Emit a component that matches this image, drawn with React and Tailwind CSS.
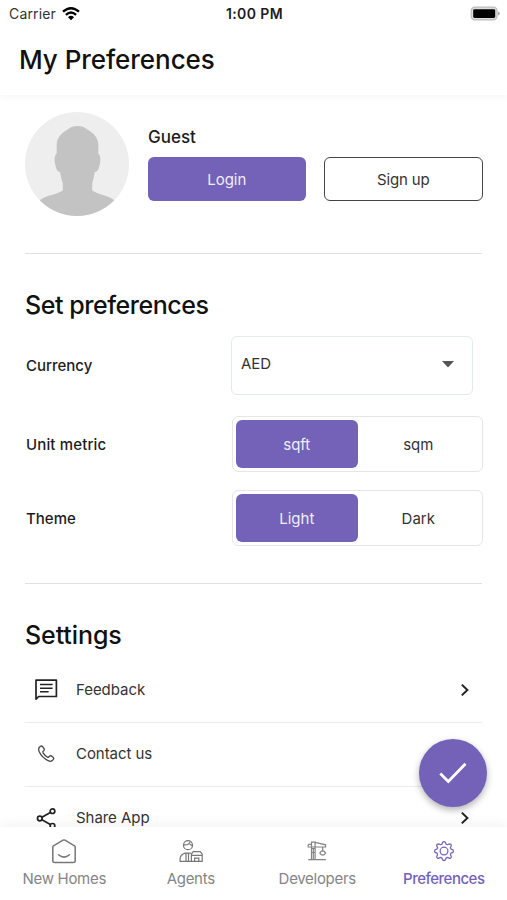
import React, { useState } from "react";

const ChevronIcon = () => (
  <svg width="10" height="14" viewBox="0 0 10 14" fill="none">
    <path d="M1.8 1.6 7.4 7 1.8 12.4" stroke="#222" strokeWidth="2" />
  </svg>
);

const FeedbackIcon = () => (
  <svg width="24" height="24" viewBox="0 0 24 24" fill="none" stroke="#222">
    <path d="M2 21.2V2.2h20.4v16.3H4.7Z" strokeWidth="1.7" strokeLinejoin="round" />
    <path d="M6 6.5h12.6M6 10.2h12.6M6 13.8h8.6" strokeWidth="1.6" />
  </svg>
);

const PhoneIcon = () => (
  <svg width="24" height="24" viewBox="0 0 24 24" fill="none" stroke="#444">
    <path
      d="M5.1 5.6 6.5 4.3Q7.7 3.6 8.6 4.6L10.2 6.9Q10.6 7.8 9.8 8.6L8.9 9.6Q8.7 10.1 9.1 10.8Q10.8 13.6 13.6 15.2Q14.2 15.5 14.7 15L15.7 14Q16.5 13.4 17.3 13.9L19.3 15.4Q20.3 16.3 19.4 17.4L18.2 18.6Q16.8 19.8 14.7 18.9Q8 16 5 9.3Q4.2 7.1 5.1 5.6Z"
      strokeWidth="1.3"
    />
  </svg>
);

const ShareIcon = () => (
  <svg width="24" height="24" viewBox="0 0 24 24" fill="none" stroke="#222" strokeWidth="1.7">
    <circle cx="18.5" cy="5.2" r="2.3" />
    <circle cx="5.8" cy="12.5" r="2.3" />
    <circle cx="18.5" cy="19.8" r="2.3" />
    <path d="M7.9 11.3 16.4 6.4M7.9 13.7l8.5 4.9" />
  </svg>
);

const HomeIcon = () => (
  <svg width="28" height="28" viewBox="0 0 28 28" fill="none" stroke="#777" strokeWidth="1.5">
    <path d="M2.8 9.2Q2.8 8.4 3.5 7.9L13 2.2Q14 1.6 15 2.2L24.5 7.9Q25.2 8.4 25.2 9.2V22.4Q25.2 24.4 23.2 24.4H4.8Q2.8 24.4 2.8 22.4Z" />
    <path d="M8.6 16.8Q14 21.4 19.4 16.8" strokeLinecap="round" />
  </svg>
);

const AgentIcon = () => (
  <svg width="28" height="28" viewBox="0 0 28 28" fill="none" stroke="#777" strokeWidth="1.2">
    <circle cx="11" cy="7.2" r="4.5" />
    <path d="M6.6 6.7Q11.6 7.7 13.2 3.6M12.5 6l2.8 1.7" />
    <path d="M14 23.4H3.1V20.8Q3.4 16.4 8.2 15.1H14.2M9 15.2v8.2M11.5 15.2v8.2" />
    <path d="M14.4 23.4V16.2L16.2 13.6H23.3L25.2 16.2V23.4ZM14.4 17.4H25.2M17.6 23.4v-3.2h4.2v3.2" />
  </svg>
);

const CraneIcon = () => (
  <svg width="28" height="28" viewBox="0 0 28 28" fill="none" stroke="#848484" strokeWidth="1.2">
    <path d="M5.2 21.7H22.8M8.5 21.7V4.2h3.6V21.7M8.5 10.5h3.6M8.5 14.5h3.6M10.3 10v11.7" />
    <path d="M5.2 6.4H8.5M12.1 4.4 22.6 6.8V9H5.2V6.4M19.7 9v4.1" />
    <path d="M16.8 15.1 18.4 13.1H21L22.6 15.1 21 16.9H18.4Z" />
  </svg>
);

const GearIcon = () => (
  <svg width="28" height="28" viewBox="-1.5 -0.5 31 31" fill="none" stroke="#7362b8" strokeWidth="1.4">
    <path
      strokeLinejoin="round"
      d="M12.6 4.2Q14 3 15.4 4.2L16.3 6.4L17.9 7L20.3 6.1Q22.1 6.1 22.1 7.9L21.1 10.2L21.7 11.7L23.9 12.6Q25 14 23.9 15.4L21.7 16.3L21.1 17.9L22.1 20.2Q22.1 22 20.3 22L17.9 21L16.3 21.7L15.4 23.8Q14 25 12.6 23.8L11.7 21.7L10.1 21L7.7 22Q5.9 22 5.9 20.2L6.9 17.9L6.3 16.3L4.1 15.4Q3 14 4.1 12.6L6.3 11.7L6.9 10.2L5.9 7.9Q5.9 6.1 7.7 6.1L10.1 7L11.7 6.4Z"
    />
    <circle cx="14" cy="14" r="4.3" />
  </svg>
);

const Avatar = () => (
  <svg width="104" height="104" viewBox="0 0 104 104">
    <defs>
      <clipPath id="avatar">
        <circle cx="52" cy="52" r="52" />
      </clipPath>
    </defs>
    <g clipPath="url(#avatar)">
      <rect width="104" height="104" fill="#eeeeee" />
      <path
        fill="#c3c3c3"
        d="M52.5 14C57 14 60 15.6 63.5 18.2C70 22 73.3 27 73.3 33V41.5C75.7 43.5 75.8 48 74.8 52C74 57 72.5 60 69.8 60C68.8 65 68.2 69 67.2 71V78.5C73 82.5 82 83 89 88L104 98V104H0V98L15 88C22 83 32 82.5 37.8 78.5V71C36.8 69 36 65 35 60C32.5 60 31 57 30.2 52C29.2 48 29.3 43.5 31.7 41.5V33C31.7 27 35 22 41.5 18.2C45 15.6 48 14 52.5 14Z"
      />
    </g>
  </svg>
);

const StatusBar = () => (
  <div className="grid h-7 grid-cols-3 items-center pl-[9px] pr-[7px]">
    <div className="flex items-center gap-1.5 pb-px text-[14px] text-[#333]">
      <span className="tracking-[0.15px]">Carrier</span>
      <svg width="18" height="14" viewBox="0 0 18 14" fill="none" stroke="#000" strokeWidth="2.4">
        <path d="M1 4.7Q9-2.2 17 4.7M3.9 7.8Q9 3.4 14.1 7.8" />
        <path d="M6 10.2Q9 7.5 12 10.2L9 13.2Z" fill="#000" stroke="none" />
      </svg>
    </div>
    <div className="pb-px text-center text-[14px] font-semibold tracking-[0.4px]">1:00 PM</div>
    <svg className="justify-self-end" width="30" height="16" viewBox="0 0 30 16">
      <rect x="1.2" y="1.2" width="25.8" height="12.6" rx="3.6" fill="#ddd" stroke="#bbb" strokeWidth="1.2" />
      <rect x="3.2" y="3.2" width="22" height="8.8" rx="1.4" />
      <path d="M28 5.5v4q1.8-.6 1.8-2T28 5.5Z" fill="#aaa" />
    </svg>
  </div>
);

const Toggle = ({ options, value, onChange }) => (
  <div className="flex h-14 w-[251px] rounded-md border border-[#e4e6e8] p-[3px]">
    {options.map((option) => (
      <button
        key={option}
        onClick={() => onChange(option)}
        className={`flex-1 rounded-md pt-0.5 text-[15px] ${
          value === option ? "bg-[#7362b8] text-[#f0edfa]" : "text-[#333]"
        }`}
      >
        {option}
      </button>
    ))}
  </div>
);

const settings = [
  { label: "Feedback", Icon: FeedbackIcon },
  { label: "Contact us", Icon: PhoneIcon },
  { label: "Share App", Icon: ShareIcon },
];

const tabs = [
  { label: "New Homes", Icon: HomeIcon },
  { label: "Agents", Icon: AgentIcon },
  { label: "Developers", Icon: CraneIcon },
  { label: "Preferences", Icon: GearIcon, active: true },
];

const App = () => {
  const [unit, setUnit] = useState("sqft");
  const [theme, setTheme] = useState("Light");

  return (
    <div className="relative flex h-[900px] w-[507px] flex-col overflow-hidden bg-white font-[Inter,sans-serif] text-[#1c1c1c]">
      <header className="h-[95px] shrink-0 shadow-[0_1px_8px_rgba(0,0,0,0.05)]">
        <StatusBar />
        <h1 className="pl-[19px] pt-3 text-[26px] font-medium leading-10 tracking-[-0.05px] text-[#111]">
          My Preferences
        </h1>
      </header>

      <main className="flex-1 overflow-hidden pl-[25px] pr-[25px]">
        <section className="flex h-[159px] gap-[18px] border-b border-[#e0e0e0] pt-[17px]">
          <Avatar />
          <div className="flex-1 pt-[13px]">
            <h2 className="pl-px text-[17px] font-medium leading-6">Guest</h2>
            <div className="-mr-px mt-2 flex gap-[18px] pl-px">
              <button className="h-11 flex-1 rounded-md bg-[#7362b8] pt-0.5 text-[15px] text-[#f0edfa]">
                Login
              </button>
              <button className="h-11 flex-1 rounded-md border-[1.5px] border-[#444] pt-0.5 text-[15px] tracking-[-0.15px] text-[#333]">
                Sign up
              </button>
            </div>
          </div>
        </section>

        <section className="h-[330px] border-b border-[#e0e0e0] pt-[35px]">
          <h2 className="text-[25px] font-medium leading-8 tracking-[-0.45px] text-[#111]">
            Set preferences
          </h2>
          <div className="mt-[15px] flex items-center justify-between">
            <span className="pl-px pt-0.5 text-[15px] font-medium">Currency</span>
            <button className="mr-[9px] flex h-[59px] w-[242px] items-center justify-between rounded-md border border-[#e4e9ea] pb-[3px] pl-[9px] pr-[18px] text-[15px] text-[#333]">
              AED
              <svg width="12" height="7" viewBox="0 0 12 7" fill="#555">
                <path d="M0 0h12L6 6.5Z" />
              </svg>
            </button>
          </div>
          <div className="-mr-px mt-[21px] flex items-center justify-between">
            <span className="pl-px pt-0.5 text-[15px] font-medium tracking-[0.15px]">Unit metric</span>
            <Toggle options={["sqft", "sqm"]} value={unit} onChange={setUnit} />
          </div>
          <div className="-mr-px mt-[18px] flex items-center justify-between">
            <span className="pl-px pt-0.5 text-[15px] font-medium">Theme</span>
            <Toggle options={["Light", "Dark"]} value={theme} onChange={setTheme} />
          </div>
        </section>

        <section className="pt-[35px]">
          <h2 className="text-[25px] font-medium leading-8 tracking-[-0.1px] text-[#111]">Settings</h2>
          <ul className="mt-2">
            {settings.map(({ label, Icon }) => (
              <li
                key={label}
                className="flex h-16 items-center border-b border-[#ececec] pb-px pl-[9px] pr-3"
              >
                <Icon />
                <span className="ml-[18px] flex-1 pt-px text-[15px] tracking-[-0.05px] text-[#333]">
                  {label}
                </span>
                <ChevronIcon />
              </li>
            ))}
          </ul>
        </section>
      </main>

      <nav className="flex h-[73px] shrink-0 bg-white pl-px shadow-[0_-2px_12px_rgba(0,0,0,0.06)]">
        {tabs.map(({ label, Icon, active }) => (
          <button
            key={label}
            className={`flex flex-1 flex-col items-center pt-[11px] text-[15px] leading-[25px] ${
              active
                ? "font-medium tracking-[-0.5px] text-[#7362b8]"
                : "tracking-[-0.3px] text-[#858585]"
            }`}
          >
            <Icon />
            {label}
          </button>
        ))}
      </nav>

      <button className="absolute bottom-[93px] right-5 flex h-[68px] w-[68px] items-center justify-center rounded-full bg-[#7362b8] shadow-[0_3px_7px_rgba(0,0,0,0.3)]">
        <svg width="28" height="22" viewBox="0 0 28 22" fill="none">
          <path d="M1.3 11.6 9.3 19.4 26.5 1.8" stroke="#fff" strokeWidth="2.8" />
        </svg>
      </button>
    </div>
  );
};

export default App;
